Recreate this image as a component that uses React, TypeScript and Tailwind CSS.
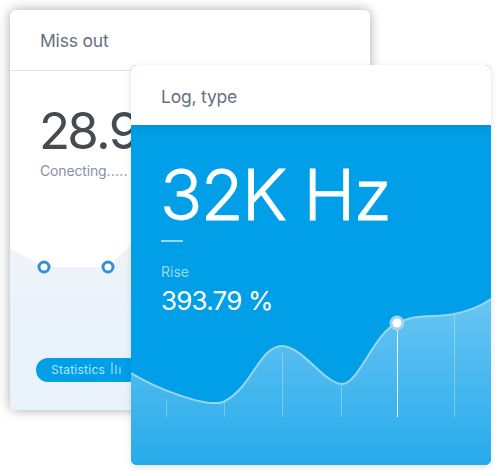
function SignalCard() {
  return (
    <section className="col-start-1 row-start-1 flex h-[400px] w-[360px] flex-col overflow-hidden rounded-[6px] bg-white shadow-[0_0_12px_rgba(0,0,0,0.34)]">
      <header className="flex h-[61px] shrink-0 items-center border-b border-[#dce5ec] px-[30px] pt-0.5">
        <h2 className="text-[17.5px] leading-6 tracking-[-0.2px] text-[#657080]">Miss out</h2>
      </header>
      <div className="relative flex grow flex-col items-start">
        <svg className="absolute bottom-0 left-0" width="360" height="170" viewBox="0 230 360 170">
          <defs>
            <linearGradient id="pale" x1="0" y1="0" x2="0" y2="1">
              <stop offset="0" stopColor="#eff4f9" />
              <stop offset="0.5" stopColor="#eaf2fa" />
              <stop offset="1" stopColor="#e9f2fb" />
            </linearGradient>
          </defs>
          <path d="M0 238L34 257H98L124 232V230H360V400H0Z" fill="url(#pale)" />
          <circle cx="34" cy="257" r="5" fill="#fff" stroke="#378dd8" strokeWidth="3" />
          <circle cx="98" cy="257" r="5" fill="#fff" stroke="#378dd8" strokeWidth="3" />
        </svg>
        <p className="mt-[28px] ml-[29px] text-[51px] leading-[64px] tracking-[-1.6px] text-[#444b51]">
          <span className="tracking-[-2.8px]">2</span>8.9
        </p>
        <p className="ml-[30px] text-[14px] leading-4 text-[#87929f]">
          <span className="tracking-[-0.15px]">Conecting</span>
          <span className="tracking-[0.2px]">.....</span>
        </p>
        <button className="relative mt-auto mb-7 ml-[26px] flex h-6 w-[104px] items-center rounded-full bg-[#009fe8] pl-[15px] text-[12px] text-[#b5e3f8]">
          <span className="tracking-[0.25px]">Statistics</span>
          <svg className="mb-1 ml-[5px]" width="12" height="14" viewBox="0 0 12 14">
            <path d="M2 1V13M6 4V13M10 6V13" fill="none" stroke="#6dc7f2" strokeWidth="1.8" />
          </svg>
        </button>
      </div>
    </section>
  );
}

function FrequencyCard() {
  return (
    <section className="z-10 col-start-1 row-start-1 mt-[55px] ml-[121px] flex h-[400px] w-[360px] flex-col overflow-hidden rounded-[6px] bg-[#009fe8] shadow-[0_2px_6px_rgba(0,0,0,0.13)]">
      <header className="relative z-10 flex h-[60px] shrink-0 items-center bg-white px-[30px] pt-1 shadow-[0_1px_10px_rgba(0,0,0,0.14)]">
        <h2 className="text-[17.5px] leading-6 tracking-[-0.2px] text-[#657080]">Log, type</h2>
      </header>
      <div className="relative grow">
        <svg className="absolute bottom-0 left-0" width="360" height="180" viewBox="0 220 360 180">
          <defs>
            <linearGradient id="wave" x1="0" y1="0" x2="0" y2="1">
              <stop offset="0" stopColor="#68c5f3" />
              <stop offset="1" stopColor="#27abeb" />
            </linearGradient>
          </defs>
          <path d="M0 308C28 325 67 338 82 338C89 338 91 338 94 336C121 322 129 281 151 281C171 281 194 319 211 319C228 319 243 268 266 258C286 248 303 253 323 249C338 246 350 241 360 234V400H0Z" fill="url(#wave)" />
          <path d="M35.5 334V352M93.5 337V352M151.5 288V352M210.5 319V352M323.5 249V352" stroke="#fff" strokeOpacity=".3" />
          <path d="M266.5 258V352" stroke="#fff" />
          <path d="M0 308C28 325 67 338 82 338C89 338 91 338 94 336C121 322 129 281 151 281C171 281 194 319 211 319C228 319 243 268 266 258C286 248 303 253 323 249C338 246 350 241 360 234" fill="none" stroke="#9bd5ea" strokeWidth="2" />
          <circle cx="266" cy="258" r="7.5" fill="#9bd5ea" />
          <circle cx="266" cy="258" r="4.5" fill="#fff" />
        </svg>
        <div className="relative flex flex-col px-[30px] pt-[30px] text-white">
          <p className="-ml-px text-[70px] leading-[80px] font-light tracking-[-1.7px] [-webkit-text-stroke:0.8px_white]">32K Hz</p>
          <div className="mt-[5px] h-0.5 w-[22px] bg-[#99d9f6]" />
          <p className="mt-[22px] text-[14px] leading-4 text-[#99d9f6]">Rise</p>
          <p className="mt-[5px] text-[26px] leading-8 tracking-[-0.8px]">393.79 %</p>
        </div>
      </div>
    </section>
  );
}

export default function App() {
  return (
    <main className="grid h-[470px] w-[501px] items-start justify-start overflow-hidden bg-white pt-2.5 pl-2.5 font-['Inter',sans-serif]">
      <SignalCard />
      <FrequencyCard />
    </main>
  );
}
